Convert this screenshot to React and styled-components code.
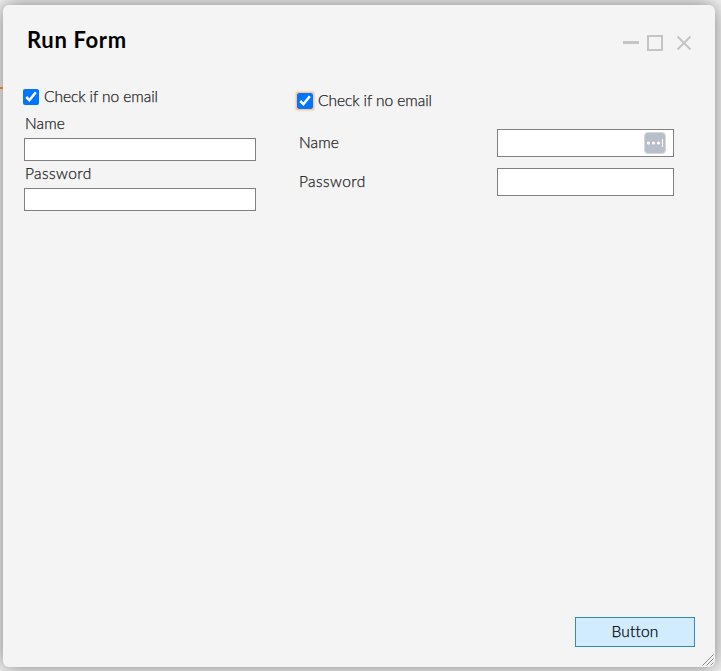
import styled, { createGlobalStyle } from "styled-components";

export default function App() {
	return (
		<Backdrop>
			<GlobalStyle />
			<Window>
				<Header>
					<Title>Run Form</Title>
					<WindowControls />
				</Header>
				<Content>
					<StackedForm>
						<CheckRow>
							<input type='checkbox' defaultChecked />
							<Text $spacing='-0.06px'>Check if no email</Text>
						</CheckRow>
						<Field>
							<Text $spacing='0.1px'>Name</Text>
							<TextInput type='text' aria-label='Name' />
						</Field>
						<Field>
							<Text $spacing='0.4px'>Password</Text>
							<TextInput type='password' aria-label='Password' />
						</Field>
					</StackedForm>
					<InlineForm>
						<CheckRow $focused>
							<input type='checkbox' defaultChecked />
							<Text $spacing='-0.06px'>Check if no email</Text>
						</CheckRow>
						<InlineField>
							<Text $spacing='0.1px'>Name</Text>
							<InputWrap>
								<TextInput $tall type='text' aria-label='Name' />
								<PasswordIcon />
							</InputWrap>
						</InlineField>
						<InlineField>
							<Text $spacing='0.4px'>Password</Text>
							<InputWrap>
								<TextInput $tall type='password' aria-label='Password' />
							</InputWrap>
						</InlineField>
					</InlineForm>
				</Content>
				<Footer>
					<Button>Button</Button>
				</Footer>
				<ResizeGrip />
			</Window>
			<Marker />
		</Backdrop>
	);
}

function WindowControls() {
	return (
		<Controls width='70' height='18' viewBox='0 0 70 18'>
			<rect x='0' y='8' width='16' height='3' />
			<path d='M25 3h14v14h-14z' />
			<path d='M54.5 3.5l13 13M67.5 3.5l-13 13' />
		</Controls>
	);
}

function PasswordIcon() {
	return (
		<FillIcon width='22' height='22' viewBox='0 0 22 22'>
			<rect x='0.5' y='0.5' width='21' height='21' rx='3.5' fill='#b8bfcb' stroke='#d3d8e0' />
			<circle cx='4.5' cy='11' r='1.6' />
			<circle cx='9.5' cy='11' r='1.6' />
			<circle cx='14.5' cy='11' r='1.6' />
			<rect x='18' y='7' width='1' height='8' />
		</FillIcon>
	);
}

function ResizeGrip() {
	return (
		<Grip width='12' height='12' viewBox='0 0 12 12'>
			<path d='M0.5 11.5l11-11M4.5 11.5l7-7M8.5 11.5l3-3' />
		</Grip>
	);
}

const GlobalStyle = createGlobalStyle`
	* {
		box-sizing: border-box;
	}
	body {
		margin: 0;
		overflow: hidden;
		font-family: "Lato", sans-serif;
	}
`;

const Backdrop = styled.div`
	position: relative;
	height: 671px;
	padding: 5px 6px 4px 3px;
	overflow: hidden;
	background: #f4f4f4;
`;

/* the strip of the page that shows behind the dialog */
const Marker = styled.span`
	position: absolute;
	left: 0;
	top: 87px;
	width: 3px;
	height: 2px;
	background: #d07c10;
`;

const Window = styled.div`
	position: relative;
	display: flex;
	flex-direction: column;
	height: 662px;
	border-radius: 6px;
	background: #f4f4f4;
	box-shadow: 0 0 20px rgba(0, 0, 0, 0.5);
`;

const Header = styled.div`
	display: flex;
	justify-content: space-between;
	height: 84px;
	padding: 21px 22px 0 24px;
`;

const Title = styled.h1`
	margin: 0;
	font-size: 22px;
	line-height: 28px;
	font-weight: 700;
	letter-spacing: 0.65px;
	color: #000;
`;

const Controls = styled.svg`
	margin-top: 7px;
	fill: none;
	stroke: #c4c4c4;
	stroke-width: 2;
	rect {
		fill: #c4c4c4;
		stroke: none;
	}
`;

const Content = styled.div`
	display: flex;
	flex: 1;
	gap: 41px;
	padding-left: 20px;
`;

const StackedForm = styled.div`
	width: 233px;
`;

const InlineForm = styled.div`
	width: 377px;
	padding-top: 4px;
`;

const CheckRow = styled.label`
	display: flex;
	align-items: center;
	gap: 5px;
	height: 16px;
	span {
		margin-top: -2px;
	}
	input {
		width: 16px;
		height: 16px;
		margin: 0;
		border-radius: 2px;
		box-shadow: ${(props) => (props.$focused ? "0 0 2px 1px rgba(255, 140, 30, 0.65)" : "none")};
	}
`;

const Text = styled.span`
	font-size: 15.5px;
	line-height: 20px;
	font-weight: 300;
	letter-spacing: ${(props) => props.$spacing || "0"};
	white-space: nowrap;
	color: #222;
	-webkit-text-stroke: 0.25px #222;
`;

const Field = styled.label`
	display: flex;
	flex-direction: column;
	padding: 8px 0 0 1px;
	span {
		height: 25px;
		padding-left: 1px;
	}
	& + & {
		padding-top: 2px;
	}
`;

const InlineField = styled.label`
	display: flex;
	align-items: center;
	justify-content: space-between;
	height: 28px;
	margin-top: 20px;
	padding-left: 2px;
	& > span {
		margin-top: -2px;
	}
	& + & {
		margin-top: 11px;
	}
`;

const InputWrap = styled.div`
	position: relative;
	display: flex;
	width: 177px;
`;

const TextInput = styled.input`
	width: 100%;
	height: ${(props) => (props.$tall ? "28px" : "23px")};
	flex-shrink: 0;
	padding: 0 4px;
	border: 1px solid #808080;
	border-radius: 0;
	background: #fff;
	outline: none;
`;

const FillIcon = styled.svg`
	position: absolute;
	right: 8px;
	top: 3px;
	fill: #fff;
`;

const Footer = styled.div`
	display: flex;
	justify-content: flex-end;
	padding: 0 20px 20px;
`;

const Button = styled.button`
	width: 120px;
	height: 30px;
	padding: 0 0 2px;
	border: 1px solid #3587cb;
	background: #d1ebff;
	font-family: inherit;
	font-size: 15.5px;
	font-weight: 300;
	letter-spacing: 0.2px;
	color: #000;
	-webkit-text-stroke: 0.25px #000;
	cursor: pointer;
`;

const Grip = styled.svg`
	position: absolute;
	right: 1px;
	bottom: 1px;
	fill: none;
	stroke: #8c8c8c;
`;
